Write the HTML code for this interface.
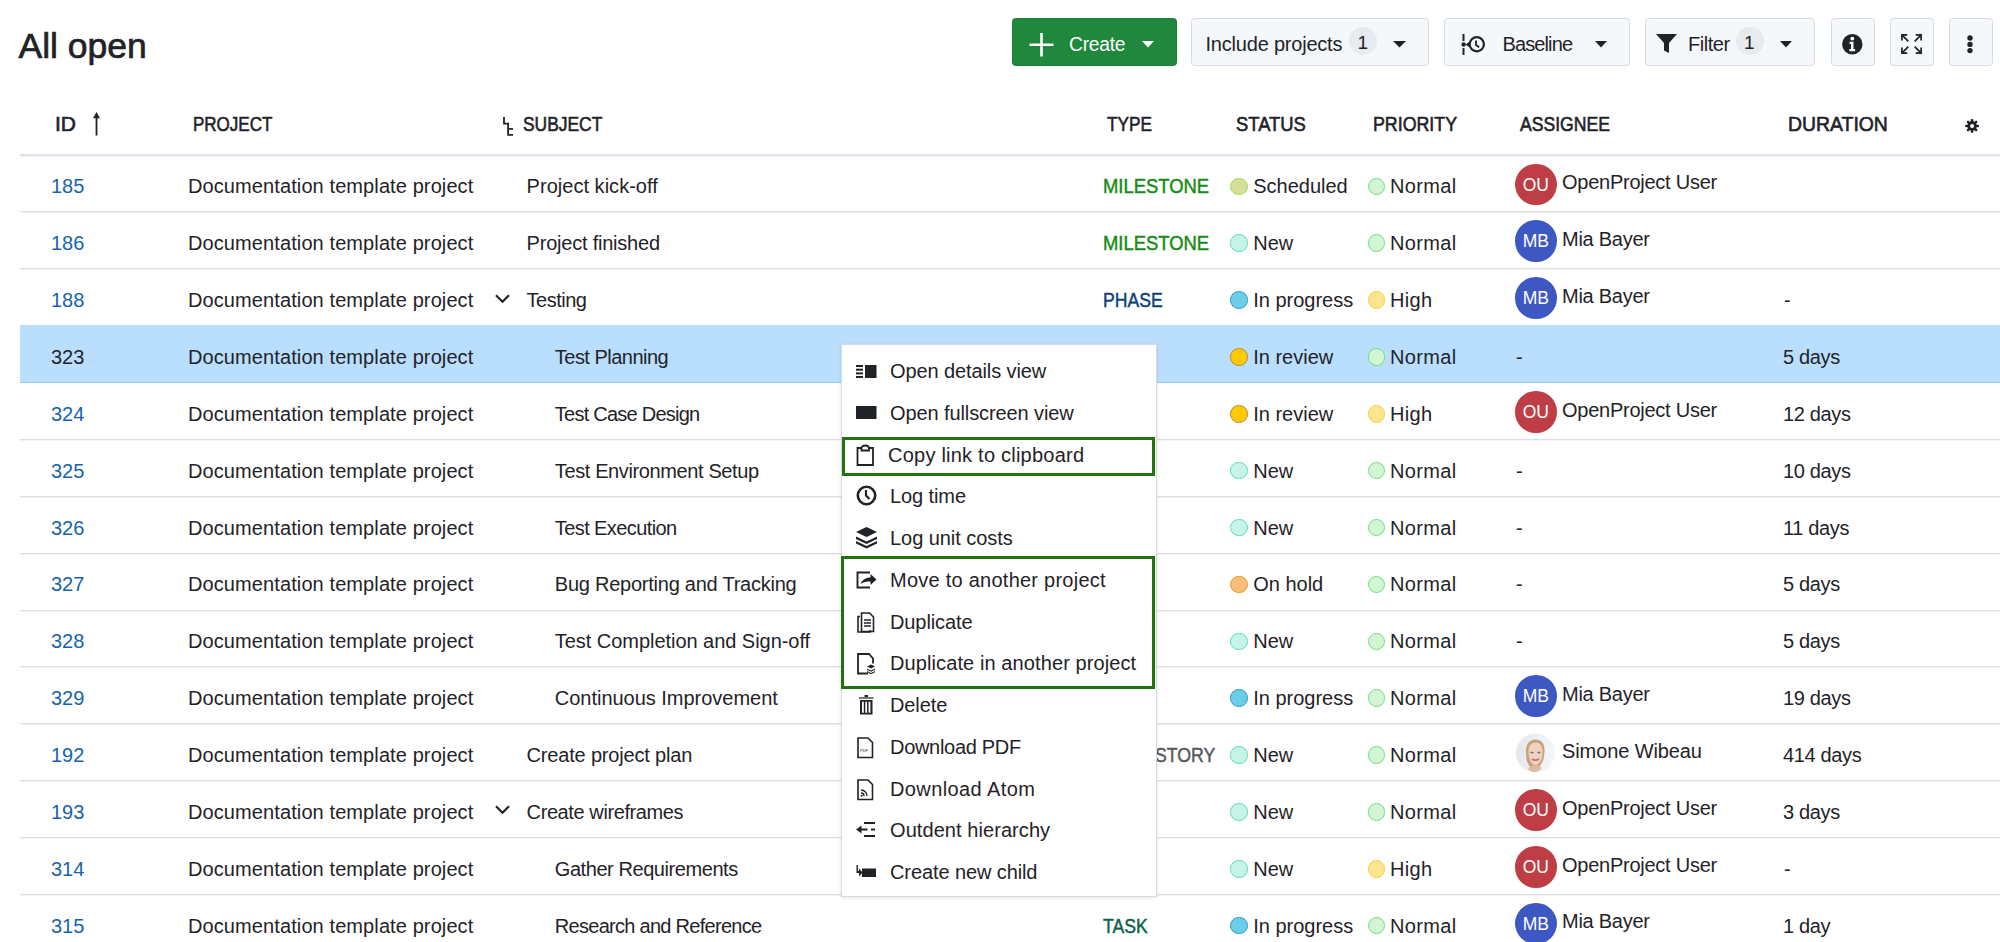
<!DOCTYPE html>
<html><head><meta charset="utf-8"><title>All open</title>
<style>
html,body{margin:0;padding:0;}
body{width:2000px;height:942px;overflow:hidden;position:relative;background:#fff;font-family:"Liberation Sans",sans-serif;color:#1f2328;}
.ty{-webkit-text-stroke:0.45px currentColor;}
.t{position:absolute;white-space:nowrap;font-size:20px;line-height:20px;}
.hd{font-weight:normal;-webkit-text-stroke:0.6px currentColor;font-size:20px;line-height:20px;}
.ic{position:absolute;overflow:visible;}
.btn{position:absolute;box-sizing:border-box;border:1px solid #d5dce3;border-radius:3.5px;background:#f5f8fb;}
.btn.green{background:#1f883d;border-color:#1b7f37;}
.cnt{position:absolute;width:28px;height:28px;border-radius:50%;background:#e7eaee;}
.hline{position:absolute;left:20px;width:1980px;height:1px;background:#d9dee4;box-shadow:0 1px 0 #f1f3f6;}
.hlrow{position:absolute;left:20px;width:1980px;background:#badefd;border-bottom:1px solid #96ccf9;box-sizing:border-box;}
.dot{position:absolute;box-sizing:border-box;width:17.5px;height:17.5px;border-radius:50%;border:1.5px solid;}
.av{position:absolute;width:41.5px;height:41.5px;border-radius:50%;color:#fff;font-size:17.5px;text-align:center;line-height:42.5px;}
.av span{display:inline-block;letter-spacing:-0.2px;}
.av.photo{background:none;}
.menu{position:absolute;background:#fff;border:1px solid #d6dbe1;box-shadow:0 1px 3px rgba(31,35,40,0.12);}
.gbox{position:absolute;border:3px solid #23710f;}
</style></head><body>
<div class="t" style="left:18.50px;top:29.33px;font-size:35.5px;line-height:35.5px;letter-spacing:0px;-webkit-text-stroke:0.7px #1f2328;">All open</div>
<div class="btn green" style="left:1012px;top:18px;width:165px;height:48px;"></div>
<svg class="ic" style="left:1029px;top:33px" width="25" height="24" viewBox="0 0 25 24"><path d="M12.5 0v23.5M0.5 11.8h24" stroke="#fff" stroke-width="2.6"/></svg>
<div class="t" style="left:1069.00px;top:35.15px;font-size:19.3px;line-height:19.3px;color:#fff;letter-spacing:-0.280px;">Create</div>
<svg class="ic" style="left:1142px;top:41px" width="12" height="7" viewBox="0 0 12 7"><path d="M0 0h12L6 6.5z" fill="#fff"/></svg>
<div class="btn" style="left:1191px;top:18px;width:238px;height:48px;"></div>
<div class="t" style="left:1205.50px;top:34.46px;font-size:20px;line-height:20px;letter-spacing:-0.207px;">Include projects</div>
<div class="cnt" style="left:1349px;top:26.5px;"></div>
<div class="t" style="left:1357.50px;top:33.11px;font-size:19px;line-height:19px;">1</div>
<svg class="ic" style="left:1393px;top:41px" width="13" height="7" viewBox="0 0 13 7"><path d="M0 0h13L6.5 6.5z" fill="#1f2328"/></svg>
<div class="btn" style="left:1444px;top:18px;width:186px;height:48px;"></div>
<svg class="ic" style="left:1461px;top:33px" width="26" height="23" viewBox="0 0 26 23"><path d="M2.5 1v7M2.5 15v7" stroke="#1f2328" stroke-width="2"/><circle cx="2.6" cy="11.5" r="2.2" fill="#1f2328"/><circle cx="15.8" cy="11.3" r="7.1" fill="none" stroke="#1f2328" stroke-width="2.2"/><path d="M15 7.5v4.5l3.2 2.2" fill="none" stroke="#1f2328" stroke-width="1.8"/><path d="M4.5 11.5l3.5-2.5v5z" fill="#1f2328"/></svg>
<div class="t" style="left:1502.50px;top:34.46px;font-size:20px;line-height:20px;letter-spacing:-0.886px;">Baseline</div>
<svg class="ic" style="left:1595px;top:41px" width="12" height="7" viewBox="0 0 12 7"><path d="M0 0h12L6 6.5z" fill="#1f2328"/></svg>
<div class="btn" style="left:1645px;top:18px;width:170px;height:48px;"></div>
<svg class="ic" style="left:1656px;top:34px" width="21" height="19" viewBox="0 0 21 19"><path d="M0 0h21L13 9v10l-5-2.5V9z" fill="#1f2328"/></svg>
<div class="t" style="left:1688.00px;top:34.46px;font-size:20px;line-height:20px;letter-spacing:-0.480px;">Filter</div>
<div class="cnt" style="left:1735.5px;top:26.5px;"></div>
<div class="t" style="left:1744.00px;top:33.11px;font-size:19px;line-height:19px;">1</div>
<svg class="ic" style="left:1780px;top:41px" width="12" height="7" viewBox="0 0 12 7"><path d="M0 0h12L6 6.5z" fill="#1f2328"/></svg>
<div class="btn" style="left:1830.5px;top:18px;width:44px;height:48px;"></div>
<div class="btn" style="left:1889.5px;top:18px;width:44px;height:48px;"></div>
<div class="btn" style="left:1948.5px;top:18px;width:44px;height:48px;"></div>
<svg class="ic" style="left:1842px;top:33.5px" width="21" height="21" viewBox="0 0 21 21"><circle cx="10.3" cy="10.2" r="10.2" fill="#1f2328"/><circle cx="10.3" cy="4.6" r="1.9" fill="#fff"/><path d="M7.6 7.7h3.9v7.3h1.6v2.3H7.4V15h1.6v-5H7.6z" fill="#fff"/></svg>
<svg class="ic" style="left:1900.5px;top:34px" width="21" height="20" viewBox="0 0 21 20" fill="none" stroke="#1f2328" stroke-width="1.7"><path d="M0.9 6.5V0.9h5.4M0.9 0.9l6.4 6.4M20.1 6.5V0.9h-5.4M20.1 0.9l-6.4 6.4M0.9 13.5v5.6h5.4M0.9 19.1l6.4-6.4M20.1 13.5v5.6h-5.4M20.1 19.1l-6.4-6.4"/></svg>
<svg class="ic" style="left:1967px;top:35px" width="6" height="19" viewBox="0 0 6 19"><circle cx="3" cy="3" r="2.7" fill="#1f2328"/><circle cx="3" cy="9.4" r="2.7" fill="#1f2328"/><circle cx="3" cy="15.6" r="2.7" fill="#1f2328"/></svg>
<div class="t hd" style="left:55.3px;top:114.36px;"><span style="display:inline-block;transform-origin:0 0;transform:scaleX(1.05)">ID</span></div>
<svg class="ic" style="left:91.5px;top:111.5px" width="9" height="24" viewBox="0 0 9 24"><path d="M4.5 5v18.5" stroke="#1f2328" stroke-width="1.8"/><path d="M4.5 0L8 6.3H1z" fill="#1f2328"/></svg>
<div class="t hd" style="left:192.5px;top:114.36px;"><span style="display:inline-block;transform-origin:0 0;transform:scaleX(0.85)">PROJECT</span></div>
<svg class="ic" style="left:502px;top:116px" width="12" height="20" viewBox="0 0 12 20" fill="none" stroke="#1f2328" stroke-width="1.8"><path d="M2 1v6.6h4.1v11.2h4.9M6.1 12.9h4.9"/></svg>
<div class="t hd" style="left:522.5px;top:114.36px;"><span style="display:inline-block;transform-origin:0 0;transform:scaleX(0.87)">SUBJECT</span></div>
<div class="t hd" style="left:1107px;top:114.36px;"><span style="display:inline-block;transform-origin:0 0;transform:scaleX(0.86)">TYPE</span></div>
<div class="t hd" style="left:1236px;top:114.36px;"><span style="display:inline-block;transform-origin:0 0;transform:scaleX(0.92)">STATUS</span></div>
<div class="t hd" style="left:1373px;top:114.36px;"><span style="display:inline-block;transform-origin:0 0;transform:scaleX(0.89)">PRIORITY</span></div>
<div class="t hd" style="left:1520px;top:114.36px;"><span style="display:inline-block;transform-origin:0 0;transform:scaleX(0.88)">ASSIGNEE</span></div>
<div class="t hd" style="left:1788px;top:114.36px;"><span style="display:inline-block;transform-origin:0 0;transform:scaleX(0.97)">DURATION</span></div>
<svg class="ic" style="left:1965px;top:119px" width="14.2" height="14" viewBox="0 0 16 16"><g fill="#1f2328"><circle cx="8" cy="8" r="5.3"/><rect x="6.5" y="0" width="3" height="4.5" rx="1.3" transform="rotate(0 8 8)"/><rect x="6.5" y="0" width="3" height="4.5" rx="1.3" transform="rotate(45 8 8)"/><rect x="6.5" y="0" width="3" height="4.5" rx="1.3" transform="rotate(90 8 8)"/><rect x="6.5" y="0" width="3" height="4.5" rx="1.3" transform="rotate(135 8 8)"/><rect x="6.5" y="0" width="3" height="4.5" rx="1.3" transform="rotate(180 8 8)"/><rect x="6.5" y="0" width="3" height="4.5" rx="1.3" transform="rotate(225 8 8)"/><rect x="6.5" y="0" width="3" height="4.5" rx="1.3" transform="rotate(270 8 8)"/><rect x="6.5" y="0" width="3" height="4.5" rx="1.3" transform="rotate(315 8 8)"/></g><circle cx="8" cy="8" r="2.3" fill="#fff"/></svg>
<div class="hline" style="top:154px;height:2px;background:#dfe3e8;"></div>
<div class="hline" style="top:211px;"></div>
<div class="t" style="left:51.00px;top:176.26px;font-size:20px;line-height:20px;color:#1763ad;">185</div>
<div class="t" style="left:188.00px;top:176.26px;font-size:20px;line-height:20px;letter-spacing:0.1px;">Documentation template project</div>
<div class="t" style="left:526.60px;top:176.26px;font-size:20px;line-height:20px;letter-spacing:0.027px;">Project kick-off</div>
<div class="t ty" style="left:1103px;top:176.26px;color:#168b12;"><span style="display:inline-block;transform-origin:0 0;transform:scaleX(0.92)">MILESTONE</span></div>
<div class="dot" style="left:1230px;top:177.60px;background:#d6df9a;border-color:#9ddf4c;"></div>
<div class="t" style="left:1253.20px;top:176.26px;font-size:20px;line-height:20px;">Scheduled</div>
<div class="dot" style="left:1367.5px;top:177.60px;background:#d2f6d3;border-color:#6fde7c;"></div>
<div class="t" style="left:1390.00px;top:176.26px;font-size:20px;line-height:20px;letter-spacing:0.35px;">Normal</div>
<div class="av" style="left:1515px;top:163.60px;background:#bf3e45;"><span>OU</span></div>
<div class="t" style="left:1562.00px;top:172.06px;font-size:20px;line-height:20px;letter-spacing:-0.25px;">OpenProject User</div>
<div class="hline" style="top:268px;"></div>
<div class="t" style="left:51.00px;top:233.13px;font-size:20px;line-height:20px;color:#1763ad;">186</div>
<div class="t" style="left:188.00px;top:233.13px;font-size:20px;line-height:20px;letter-spacing:0.1px;">Documentation template project</div>
<div class="t" style="left:526.60px;top:233.13px;font-size:20px;line-height:20px;letter-spacing:-0.220px;">Project finished</div>
<div class="t ty" style="left:1103px;top:233.13px;color:#168b12;"><span style="display:inline-block;transform-origin:0 0;transform:scaleX(0.92)">MILESTONE</span></div>
<div class="dot" style="left:1230px;top:234.47px;background:#c4f5e6;border-color:#58dcbc;"></div>
<div class="t" style="left:1253.20px;top:233.13px;font-size:20px;line-height:20px;">New</div>
<div class="dot" style="left:1367.5px;top:234.47px;background:#d2f6d3;border-color:#6fde7c;"></div>
<div class="t" style="left:1390.00px;top:233.13px;font-size:20px;line-height:20px;letter-spacing:0.35px;">Normal</div>
<div class="av" style="left:1515px;top:220.47px;background:#3e58c3;"><span>MB</span></div>
<div class="t" style="left:1562.00px;top:228.94px;font-size:20px;line-height:20px;letter-spacing:-0.25px;">Mia Bayer</div>
<div class="hline" style="top:325px;"></div>
<div class="t" style="left:51.00px;top:290.01px;font-size:20px;line-height:20px;color:#1763ad;">188</div>
<div class="t" style="left:188.00px;top:290.01px;font-size:20px;line-height:20px;letter-spacing:0.1px;">Documentation template project</div>
<svg class="ic" style="left:495px;top:293.55px" width="15" height="10" viewBox="0 0 15 10"><path d="M1 1.2l6.5 6.6 6.5-6.6" fill="none" stroke="#1f2328" stroke-width="2.2"/></svg>
<div class="t" style="left:526.60px;top:290.01px;font-size:20px;line-height:20px;letter-spacing:-0.500px;">Testing</div>
<div class="t ty" style="left:1103px;top:290.01px;color:#0b4275;"><span style="display:inline-block;transform-origin:0 0;transform:scaleX(0.88)">PHASE</span></div>
<div class="dot" style="left:1230px;top:291.35px;background:#6ccde9;border-color:#2a9cc0;"></div>
<div class="t" style="left:1253.20px;top:290.01px;font-size:20px;line-height:20px;">In progress</div>
<div class="dot" style="left:1367.5px;top:291.35px;background:#fde58f;border-color:#f4d13c;"></div>
<div class="t" style="left:1390.00px;top:290.01px;font-size:20px;line-height:20px;letter-spacing:0.35px;">High</div>
<div class="av" style="left:1515px;top:277.35px;background:#3e58c3;"><span>MB</span></div>
<div class="t" style="left:1562.00px;top:285.81px;font-size:20px;line-height:20px;letter-spacing:-0.25px;">Mia Bayer</div>
<div class="t" style="left:1784.00px;top:290.01px;font-size:20px;line-height:20px;letter-spacing:-0.35px;">-</div>
<div class="hlrow" style="top:325px;height:58px;"></div>
<div class="t" style="left:51.00px;top:346.89px;font-size:20px;line-height:20px;color:#1f2328;">323</div>
<div class="t" style="left:188.00px;top:346.89px;font-size:20px;line-height:20px;letter-spacing:0.1px;">Documentation template project</div>
<div class="t" style="left:554.80px;top:346.89px;font-size:20px;line-height:20px;letter-spacing:-0.517px;">Test Planning</div>
<div class="dot" style="left:1230px;top:348.23px;background:#ffc900;border-color:#b98a3c;"></div>
<div class="t" style="left:1253.20px;top:346.89px;font-size:20px;line-height:20px;">In review</div>
<div class="dot" style="left:1367.5px;top:348.23px;background:#d2f6d3;border-color:#6fde7c;"></div>
<div class="t" style="left:1390.00px;top:346.89px;font-size:20px;line-height:20px;letter-spacing:0.35px;">Normal</div>
<div class="t" style="left:1516.00px;top:346.89px;font-size:20px;line-height:20px;">-</div>
<div class="t" style="left:1783.00px;top:346.89px;font-size:20px;line-height:20px;letter-spacing:-0.35px;">5 days</div>
<div class="hline" style="top:439px;"></div>
<div class="t" style="left:51.00px;top:403.76px;font-size:20px;line-height:20px;color:#1763ad;">324</div>
<div class="t" style="left:188.00px;top:403.76px;font-size:20px;line-height:20px;letter-spacing:0.1px;">Documentation template project</div>
<div class="t" style="left:554.80px;top:403.76px;font-size:20px;line-height:20px;letter-spacing:-0.753px;">Test Case Design</div>
<div class="dot" style="left:1230px;top:405.10px;background:#ffc900;border-color:#b98a3c;"></div>
<div class="t" style="left:1253.20px;top:403.76px;font-size:20px;line-height:20px;">In review</div>
<div class="dot" style="left:1367.5px;top:405.10px;background:#fde58f;border-color:#f4d13c;"></div>
<div class="t" style="left:1390.00px;top:403.76px;font-size:20px;line-height:20px;letter-spacing:0.35px;">High</div>
<div class="av" style="left:1515px;top:391.10px;background:#bf3e45;"><span>OU</span></div>
<div class="t" style="left:1562.00px;top:399.56px;font-size:20px;line-height:20px;letter-spacing:-0.25px;">OpenProject User</div>
<div class="t" style="left:1783.00px;top:403.76px;font-size:20px;line-height:20px;letter-spacing:-0.35px;">12 days</div>
<div class="hline" style="top:496px;"></div>
<div class="t" style="left:51.00px;top:460.64px;font-size:20px;line-height:20px;color:#1763ad;">325</div>
<div class="t" style="left:188.00px;top:460.64px;font-size:20px;line-height:20px;letter-spacing:0.1px;">Documentation template project</div>
<div class="t" style="left:554.80px;top:460.64px;font-size:20px;line-height:20px;letter-spacing:-0.381px;">Test Environment Setup</div>
<div class="dot" style="left:1230px;top:461.98px;background:#c4f5e6;border-color:#58dcbc;"></div>
<div class="t" style="left:1253.20px;top:460.64px;font-size:20px;line-height:20px;">New</div>
<div class="dot" style="left:1367.5px;top:461.98px;background:#d2f6d3;border-color:#6fde7c;"></div>
<div class="t" style="left:1390.00px;top:460.64px;font-size:20px;line-height:20px;letter-spacing:0.35px;">Normal</div>
<div class="t" style="left:1516.00px;top:460.64px;font-size:20px;line-height:20px;">-</div>
<div class="t" style="left:1783.00px;top:460.64px;font-size:20px;line-height:20px;letter-spacing:-0.35px;">10 days</div>
<div class="hline" style="top:553px;"></div>
<div class="t" style="left:51.00px;top:517.51px;font-size:20px;line-height:20px;color:#1763ad;">326</div>
<div class="t" style="left:188.00px;top:517.51px;font-size:20px;line-height:20px;letter-spacing:0.1px;">Documentation template project</div>
<div class="t" style="left:554.80px;top:517.51px;font-size:20px;line-height:20px;letter-spacing:-0.592px;">Test Execution</div>
<div class="dot" style="left:1230px;top:518.85px;background:#c4f5e6;border-color:#58dcbc;"></div>
<div class="t" style="left:1253.20px;top:517.51px;font-size:20px;line-height:20px;">New</div>
<div class="dot" style="left:1367.5px;top:518.85px;background:#d2f6d3;border-color:#6fde7c;"></div>
<div class="t" style="left:1390.00px;top:517.51px;font-size:20px;line-height:20px;letter-spacing:0.35px;">Normal</div>
<div class="t" style="left:1516.00px;top:517.51px;font-size:20px;line-height:20px;">-</div>
<div class="t" style="left:1783.00px;top:517.51px;font-size:20px;line-height:20px;letter-spacing:-0.35px;">11 days</div>
<div class="hline" style="top:610px;"></div>
<div class="t" style="left:51.00px;top:574.38px;font-size:20px;line-height:20px;color:#1763ad;">327</div>
<div class="t" style="left:188.00px;top:574.38px;font-size:20px;line-height:20px;letter-spacing:0.1px;">Documentation template project</div>
<div class="t" style="left:554.80px;top:574.38px;font-size:20px;line-height:20px;letter-spacing:-0.240px;">Bug Reporting and Tracking</div>
<div class="dot" style="left:1230px;top:575.73px;background:#f6be7a;border-color:#e6991f;"></div>
<div class="t" style="left:1253.20px;top:574.38px;font-size:20px;line-height:20px;">On hold</div>
<div class="dot" style="left:1367.5px;top:575.73px;background:#d2f6d3;border-color:#6fde7c;"></div>
<div class="t" style="left:1390.00px;top:574.38px;font-size:20px;line-height:20px;letter-spacing:0.35px;">Normal</div>
<div class="t" style="left:1516.00px;top:574.38px;font-size:20px;line-height:20px;">-</div>
<div class="t" style="left:1783.00px;top:574.38px;font-size:20px;line-height:20px;letter-spacing:-0.35px;">5 days</div>
<div class="hline" style="top:666px;"></div>
<div class="t" style="left:51.00px;top:631.26px;font-size:20px;line-height:20px;color:#1763ad;">328</div>
<div class="t" style="left:188.00px;top:631.26px;font-size:20px;line-height:20px;letter-spacing:0.1px;">Documentation template project</div>
<div class="t" style="left:554.80px;top:631.26px;font-size:20px;line-height:20px;letter-spacing:-0.041px;">Test Completion and Sign-off</div>
<div class="dot" style="left:1230px;top:632.60px;background:#c4f5e6;border-color:#58dcbc;"></div>
<div class="t" style="left:1253.20px;top:631.26px;font-size:20px;line-height:20px;">New</div>
<div class="dot" style="left:1367.5px;top:632.60px;background:#d2f6d3;border-color:#6fde7c;"></div>
<div class="t" style="left:1390.00px;top:631.26px;font-size:20px;line-height:20px;letter-spacing:0.35px;">Normal</div>
<div class="t" style="left:1516.00px;top:631.26px;font-size:20px;line-height:20px;">-</div>
<div class="t" style="left:1783.00px;top:631.26px;font-size:20px;line-height:20px;letter-spacing:-0.35px;">5 days</div>
<div class="hline" style="top:723px;"></div>
<div class="t" style="left:51.00px;top:688.13px;font-size:20px;line-height:20px;color:#1763ad;">329</div>
<div class="t" style="left:188.00px;top:688.13px;font-size:20px;line-height:20px;letter-spacing:0.1px;">Documentation template project</div>
<div class="t" style="left:554.80px;top:688.13px;font-size:20px;line-height:20px;letter-spacing:-0.019px;">Continuous Improvement</div>
<div class="dot" style="left:1230px;top:689.48px;background:#6ccde9;border-color:#2a9cc0;"></div>
<div class="t" style="left:1253.20px;top:688.13px;font-size:20px;line-height:20px;">In progress</div>
<div class="dot" style="left:1367.5px;top:689.48px;background:#d2f6d3;border-color:#6fde7c;"></div>
<div class="t" style="left:1390.00px;top:688.13px;font-size:20px;line-height:20px;letter-spacing:0.35px;">Normal</div>
<div class="av" style="left:1515px;top:675.48px;background:#3e58c3;"><span>MB</span></div>
<div class="t" style="left:1562.00px;top:683.93px;font-size:20px;line-height:20px;letter-spacing:-0.25px;">Mia Bayer</div>
<div class="t" style="left:1783.00px;top:688.13px;font-size:20px;line-height:20px;letter-spacing:-0.35px;">19 days</div>
<div class="hline" style="top:780px;"></div>
<div class="t" style="left:51.00px;top:745.01px;font-size:20px;line-height:20px;color:#1763ad;">192</div>
<div class="t" style="left:188.00px;top:745.01px;font-size:20px;line-height:20px;letter-spacing:0.1px;">Documentation template project</div>
<div class="t" style="left:526.60px;top:745.01px;font-size:20px;line-height:20px;letter-spacing:-0.183px;">Create project plan</div>
<div class="t ty" style="left:1154.5px;top:745.01px;color:#55585d;"><span style="display:inline-block;transform-origin:0 0;transform:scaleX(0.885)">STORY</span></div>
<div class="dot" style="left:1230px;top:746.35px;background:#c4f5e6;border-color:#58dcbc;"></div>
<div class="t" style="left:1253.20px;top:745.01px;font-size:20px;line-height:20px;">New</div>
<div class="dot" style="left:1367.5px;top:746.35px;background:#d2f6d3;border-color:#6fde7c;"></div>
<div class="t" style="left:1390.00px;top:745.01px;font-size:20px;line-height:20px;letter-spacing:0.35px;">Normal</div>
<div class="av photo" style="left:1515px;top:732.85px;"><svg width="41" height="41" viewBox="0 0 41 41"><defs><linearGradient id="bgph" x1="0" y1="0" x2="1" y2="0"><stop offset="0" stop-color="#e4e8ec"/><stop offset="1" stop-color="#f4f7fa"/></linearGradient></defs><circle cx="20.5" cy="20" r="19.5" fill="url(#bgph)"/><path d="M11 21c-1-9 3-14 9-14.5 6-.5 10 4 9.5 12l-1 8c-2 5-5 9-9 9s-7-4-8-9z" fill="#c9a17b"/><path d="M13.5 19c0-6 3-9.5 7-9.5s7 3 7 9.5c0 7-3 13-7 13s-7-6-7-13z" fill="#efd3c2"/><path d="M13 36c1.5-3 4.5-4 7.5-4s5 1 6 3c-1 2-4 4-7 4s-5.5-1.5-6.5-3z" fill="#e2b99f"/><path d="M15.5 19.5h3M22.5 19.5h3" stroke="#6e6d74" stroke-width="1.3"/><path d="M17 26q3.5 2.2 7 0" stroke="#c46d6d" stroke-width="1.6" fill="none"/></svg></div>
<div class="t" style="left:1562.00px;top:741.41px;font-size:20px;line-height:20px;letter-spacing:-0.1px;">Simone Wibeau</div>
<div class="t" style="left:1783.00px;top:745.01px;font-size:20px;line-height:20px;letter-spacing:-0.35px;">414 days</div>
<div class="hline" style="top:837px;"></div>
<div class="t" style="left:51.00px;top:801.88px;font-size:20px;line-height:20px;color:#1763ad;">193</div>
<div class="t" style="left:188.00px;top:801.88px;font-size:20px;line-height:20px;letter-spacing:0.1px;">Documentation template project</div>
<svg class="ic" style="left:495px;top:805.43px" width="15" height="10" viewBox="0 0 15 10"><path d="M1 1.2l6.5 6.6 6.5-6.6" fill="none" stroke="#1f2328" stroke-width="2.2"/></svg>
<div class="t" style="left:526.60px;top:801.88px;font-size:20px;line-height:20px;letter-spacing:-0.406px;">Create wireframes</div>
<div class="dot" style="left:1230px;top:803.23px;background:#c4f5e6;border-color:#58dcbc;"></div>
<div class="t" style="left:1253.20px;top:801.88px;font-size:20px;line-height:20px;">New</div>
<div class="dot" style="left:1367.5px;top:803.23px;background:#d2f6d3;border-color:#6fde7c;"></div>
<div class="t" style="left:1390.00px;top:801.88px;font-size:20px;line-height:20px;letter-spacing:0.35px;">Normal</div>
<div class="av" style="left:1515px;top:789.23px;background:#bf3e45;"><span>OU</span></div>
<div class="t" style="left:1562.00px;top:797.68px;font-size:20px;line-height:20px;letter-spacing:-0.25px;">OpenProject User</div>
<div class="t" style="left:1783.00px;top:801.88px;font-size:20px;line-height:20px;letter-spacing:-0.35px;">3 days</div>
<div class="hline" style="top:894px;"></div>
<div class="t" style="left:51.00px;top:858.76px;font-size:20px;line-height:20px;color:#1763ad;">314</div>
<div class="t" style="left:188.00px;top:858.76px;font-size:20px;line-height:20px;letter-spacing:0.1px;">Documentation template project</div>
<div class="t" style="left:554.80px;top:858.76px;font-size:20px;line-height:20px;letter-spacing:-0.433px;">Gather Requirements</div>
<div class="dot" style="left:1230px;top:860.10px;background:#c4f5e6;border-color:#58dcbc;"></div>
<div class="t" style="left:1253.20px;top:858.76px;font-size:20px;line-height:20px;">New</div>
<div class="dot" style="left:1367.5px;top:860.10px;background:#fde58f;border-color:#f4d13c;"></div>
<div class="t" style="left:1390.00px;top:858.76px;font-size:20px;line-height:20px;letter-spacing:0.35px;">High</div>
<div class="av" style="left:1515px;top:846.10px;background:#bf3e45;"><span>OU</span></div>
<div class="t" style="left:1562.00px;top:854.56px;font-size:20px;line-height:20px;letter-spacing:-0.25px;">OpenProject User</div>
<div class="t" style="left:1784.00px;top:858.76px;font-size:20px;line-height:20px;letter-spacing:-0.35px;">-</div>
<div class="hline" style="top:951px;"></div>
<div class="t" style="left:51.00px;top:915.63px;font-size:20px;line-height:20px;color:#1763ad;">315</div>
<div class="t" style="left:188.00px;top:915.63px;font-size:20px;line-height:20px;letter-spacing:0.1px;">Documentation template project</div>
<div class="t" style="left:554.80px;top:915.63px;font-size:20px;line-height:20px;letter-spacing:-0.714px;">Research and Reference</div>
<div class="t ty" style="left:1103px;top:915.63px;color:#0a6349;"><span style="display:inline-block;transform-origin:0 0;transform:scaleX(0.88)">TASK</span></div>
<div class="dot" style="left:1230px;top:916.98px;background:#6ccde9;border-color:#2a9cc0;"></div>
<div class="t" style="left:1253.20px;top:915.63px;font-size:20px;line-height:20px;">In progress</div>
<div class="dot" style="left:1367.5px;top:916.98px;background:#d2f6d3;border-color:#6fde7c;"></div>
<div class="t" style="left:1390.00px;top:915.63px;font-size:20px;line-height:20px;letter-spacing:0.35px;">Normal</div>
<div class="av" style="left:1515px;top:902.98px;background:#3e58c3;"><span>MB</span></div>
<div class="t" style="left:1562.00px;top:911.43px;font-size:20px;line-height:20px;letter-spacing:-0.25px;">Mia Bayer</div>
<div class="t" style="left:1783.00px;top:915.63px;font-size:20px;line-height:20px;letter-spacing:-0.35px;">1 day</div>
<div class="menu" style="left:841px;top:344px;width:314px;height:551px;"></div>
<div class="t" style="left:890.00px;top:361.16px;font-size:20px;line-height:20px;letter-spacing:-0.1px;">Open details view</div>
<div class="t" style="left:890.00px;top:402.90px;font-size:20px;line-height:20px;letter-spacing:-0.1px;">Open fullscreen view</div>
<div class="t" style="left:888.00px;top:444.64px;font-size:20px;line-height:20px;letter-spacing:0.23px;">Copy link to clipboard</div>
<div class="t" style="left:890.00px;top:486.38px;font-size:20px;line-height:20px;letter-spacing:-0.1px;">Log time</div>
<div class="t" style="left:890.00px;top:528.12px;font-size:20px;line-height:20px;letter-spacing:-0.05px;">Log unit costs</div>
<div class="t" style="left:890.00px;top:569.86px;font-size:20px;line-height:20px;letter-spacing:0.25px;">Move to another project</div>
<div class="t" style="left:890.00px;top:611.60px;font-size:20px;line-height:20px;letter-spacing:-0.1px;">Duplicate</div>
<div class="t" style="left:890.00px;top:653.34px;font-size:20px;line-height:20px;letter-spacing:0.1px;">Duplicate in another project</div>
<div class="t" style="left:890.00px;top:695.08px;font-size:20px;line-height:20px;letter-spacing:-0.1px;">Delete</div>
<div class="t" style="left:890.00px;top:736.82px;font-size:20px;line-height:20px;letter-spacing:-0.3px;">Download PDF</div>
<div class="t" style="left:890.00px;top:778.56px;font-size:20px;line-height:20px;letter-spacing:0.4px;">Download Atom</div>
<div class="t" style="left:890.00px;top:820.30px;font-size:20px;line-height:20px;letter-spacing:0.07px;">Outdent hierarchy</div>
<div class="t" style="left:890.00px;top:862.04px;font-size:20px;line-height:20px;letter-spacing:-0.1px;">Create new child</div>
<div class="gbox" style="left:841.5px;top:437px;width:307px;height:33px;"></div>
<div class="gbox" style="left:841px;top:556px;width:308px;height:127px;"></div>
<svg class="ic" style="left:856px;top:365.10px" width="21" height="14" viewBox="0 0 21 14"><g fill="#1f2328"><rect x="0" y="0" width="7" height="2"/><rect x="0" y="3.7" width="7" height="2"/><rect x="0" y="7.4" width="7" height="2"/><rect x="0" y="11" width="7" height="2"/><rect x="9" y="0" width="11.5" height="13"/></g></svg>
<svg class="ic" style="left:856px;top:406.34px" width="21" height="14" viewBox="0 0 21 14"><rect x="0" y="0" width="20.5" height="13" fill="#1f2328"/></svg>
<svg class="ic" style="left:856px;top:445.08px" width="19" height="21" viewBox="0 0 19 21"><g fill="none" stroke="#1f2328" stroke-width="1.8"><path d="M5.5 3H1.5v17h15.5V3H13"/><path d="M5.5 5.5V3.5c0-2 1.5-3 3.75-3S13 1.5 13 3.5v2z"/></g></svg>
<svg class="ic" style="left:856px;top:485.32px" width="21" height="21" viewBox="0 0 21 21"><g fill="none" stroke="#1f2328" stroke-width="2.6"><circle cx="10.5" cy="10.5" r="8.7"/><path d="M10 5v5.5l3.5 3.5" stroke-width="2.2"/></g></svg>
<svg class="ic" style="left:856px;top:527.06px" width="21" height="22" viewBox="0 0 21 22"><g fill="#1f2328"><path d="M10.5 0L21 5 10.5 10 0 5z"/><path d="M0 9.5l10.5 5 10.5-5v2.5l-10.5 5L0 12z"/><path d="M0 14l10.5 5 10.5-5v2.5l-10.5 5L0 16.5z"/></g></svg>
<svg class="ic" style="left:856px;top:570.80px" width="21" height="18" viewBox="0 0 21 18"><g><path d="M14 1.5H1.5v15h12.5" fill="none" stroke="#1f2328" stroke-width="1.9"/><path d="M4.5 13c2-5 6-6.5 10-6.5V3l6 5.5-6 5.5V10.5c-4 0-7 .5-10 2.5z" fill="#1f2328"/></g></svg>
<svg class="ic" style="left:857px;top:611.54px" width="18" height="21" viewBox="0 0 18 21"><g fill="none" stroke="#1f2328" stroke-width="1.6"><path d="M3 4.5H1v15.5h12v-2"/><path d="M4.5 1h8l4 4v14.5h-12z"/><path d="M7 8h7M7 11h7M7 14h7"/></g></svg>
<svg class="ic" style="left:857px;top:653.28px" width="19" height="22" viewBox="0 0 19 22"><g fill="none" stroke="#1f2328" stroke-width="1.8"><path d="M11 20.5H1V1h11l4 4.5v5"/></g><g fill="#1f2328"><path d="M14 11.5l4 2-4 2-4-2z"/><path d="M10 15.5l4 2 4-2v1.3l-4 2-4-2z"/><path d="M10 18l4 2 4-2v1.3l-4 2-4-2z"/></g></svg>
<svg class="ic" style="left:859px;top:694.52px" width="15" height="20" viewBox="0 0 15 20"><g fill="#1f2328"><rect x="0" y="2" width="14.5" height="2" fill="#777"/><rect x="5.5" y="0" width="3.5" height="2"/><path d="M1 5h12.5v14.5H1z M3 6.8v11h1.8v-11z M6.3 6.8v11h1.8v-11z M9.6 6.8v11h1.8v-11z" fill-rule="evenodd"/></g></svg>
<svg class="ic" style="left:857px;top:736.76px" width="17" height="22" viewBox="0 0 17 22"><g fill="none" stroke="#1f2328" stroke-width="1.6"><path d="M1 1h10l4.5 4.5v15H1z"/></g><text x="3" y="15" font-size="4" fill="#1f2328" font-family="Liberation Sans">PDF</text></svg>
<svg class="ic" style="left:857px;top:778.50px" width="17" height="22" viewBox="0 0 17 22"><g fill="none" stroke="#1f2328" stroke-width="1.6"><path d="M1 1h10l4.5 4.5v15H1z"/></g><g fill="none" stroke="#1f2328" stroke-width="1.4"><path d="M4 11a6 6 0 0 1 6 6M4 14a3 3 0 0 1 3 3"/></g><circle cx="4.6" cy="16.7" r="1" fill="#1f2328"/></svg>
<svg class="ic" style="left:855.5px;top:821.24px" width="20" height="17" viewBox="0 0 20 17"><g fill="#1f2328"><path d="M0 8.5L5.5 4.5v3h6v2h-6v3z"/><rect x="8" y="1" width="11" height="2"/><rect x="15" y="7.5" width="4" height="2"/><rect x="8" y="14" width="11" height="2"/></g></svg>
<svg class="ic" style="left:856px;top:864.98px" width="21" height="13" viewBox="0 0 21 13"><g fill="#1f2328"><rect x="6" y="3.5" width="14" height="8.5"/><path d="M0.5 0h1.4v6H3V3.5L6.5 7.5 3 11.5V8H0.5z"/></g></svg>
</body></html>
